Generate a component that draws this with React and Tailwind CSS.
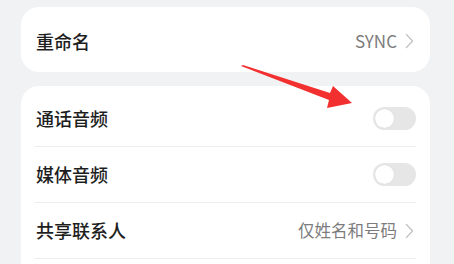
import React from "react"

const Chevron = () => (
  <svg width="9" height="16" viewBox="0 0 9 16" className="ml-[8px]">
    <path d="M1.5 1.5 L7.5 8 L1.5 14.5" fill="none" stroke="#c4c4c4" strokeWidth="1.4" strokeLinecap="round" strokeLinejoin="round" />
  </svg>
)

const Toggle = () => (
  <div className="w-[43px] h-[23px] rounded-full bg-[#e6e6e6] p-[2px] flex items-center">
    <div className="w-[19px] h-[19px] rounded-full bg-white shadow-[0_0_1px_rgba(0,0,0,0.15)]" />
  </div>
)

const Row = ({ label, children, divider = true }) => (
  <div className={`h-[56px] flex items-center justify-between ${divider ? "border-b border-[#ececec]" : ""}`}>
    <span className="text-[18px] font-medium text-[#1e1e1e] pl-[1px]">{label}</span>
    {children}
  </div>
)

const App = () => {
  return (
    <div
      className="relative w-[454px] h-[264px] overflow-hidden bg-[#f1f2f4] pl-[21px] pr-[24px] pt-[7px]"
      style={{ fontFamily: '"Noto Sans CJK SC", "Noto Sans", sans-serif' }}
    >
      <div className="bg-white rounded-[18px] h-[65px] pl-[14px] pr-[16px] flex items-center justify-between pt-[3px]">
        <span className="text-[18px] font-medium text-[#1e1e1e] pl-[1px]">重命名</span>
        <div className="flex items-center text-[17px] text-[#7c7c7c]">
          <span>SYNC</span>
          <Chevron />
        </div>
      </div>

      <div className="mt-[14px] bg-white rounded-[18px] px-[14px] pt-[5px] h-[200px]">
        <Row label="通话音频">
          <Toggle />
        </Row>
        <Row label="媒体音频">
          <Toggle />
        </Row>
        <Row label="共享联系人">
          <div className="flex items-center text-[16.5px] text-[#7c7c7c] pr-[2px]">
            <span>仅姓名和号码</span>
            <Chevron />
          </div>
        </Row>
      </div>

      <svg className="absolute left-0 top-0 pointer-events-none" width="454" height="264">
        <polygon points="241,66 243,65 330,93 333,86 352,103 327,108 329,100" fill="#f2302f" />
      </svg>
    </div>
  )
}

export default App
